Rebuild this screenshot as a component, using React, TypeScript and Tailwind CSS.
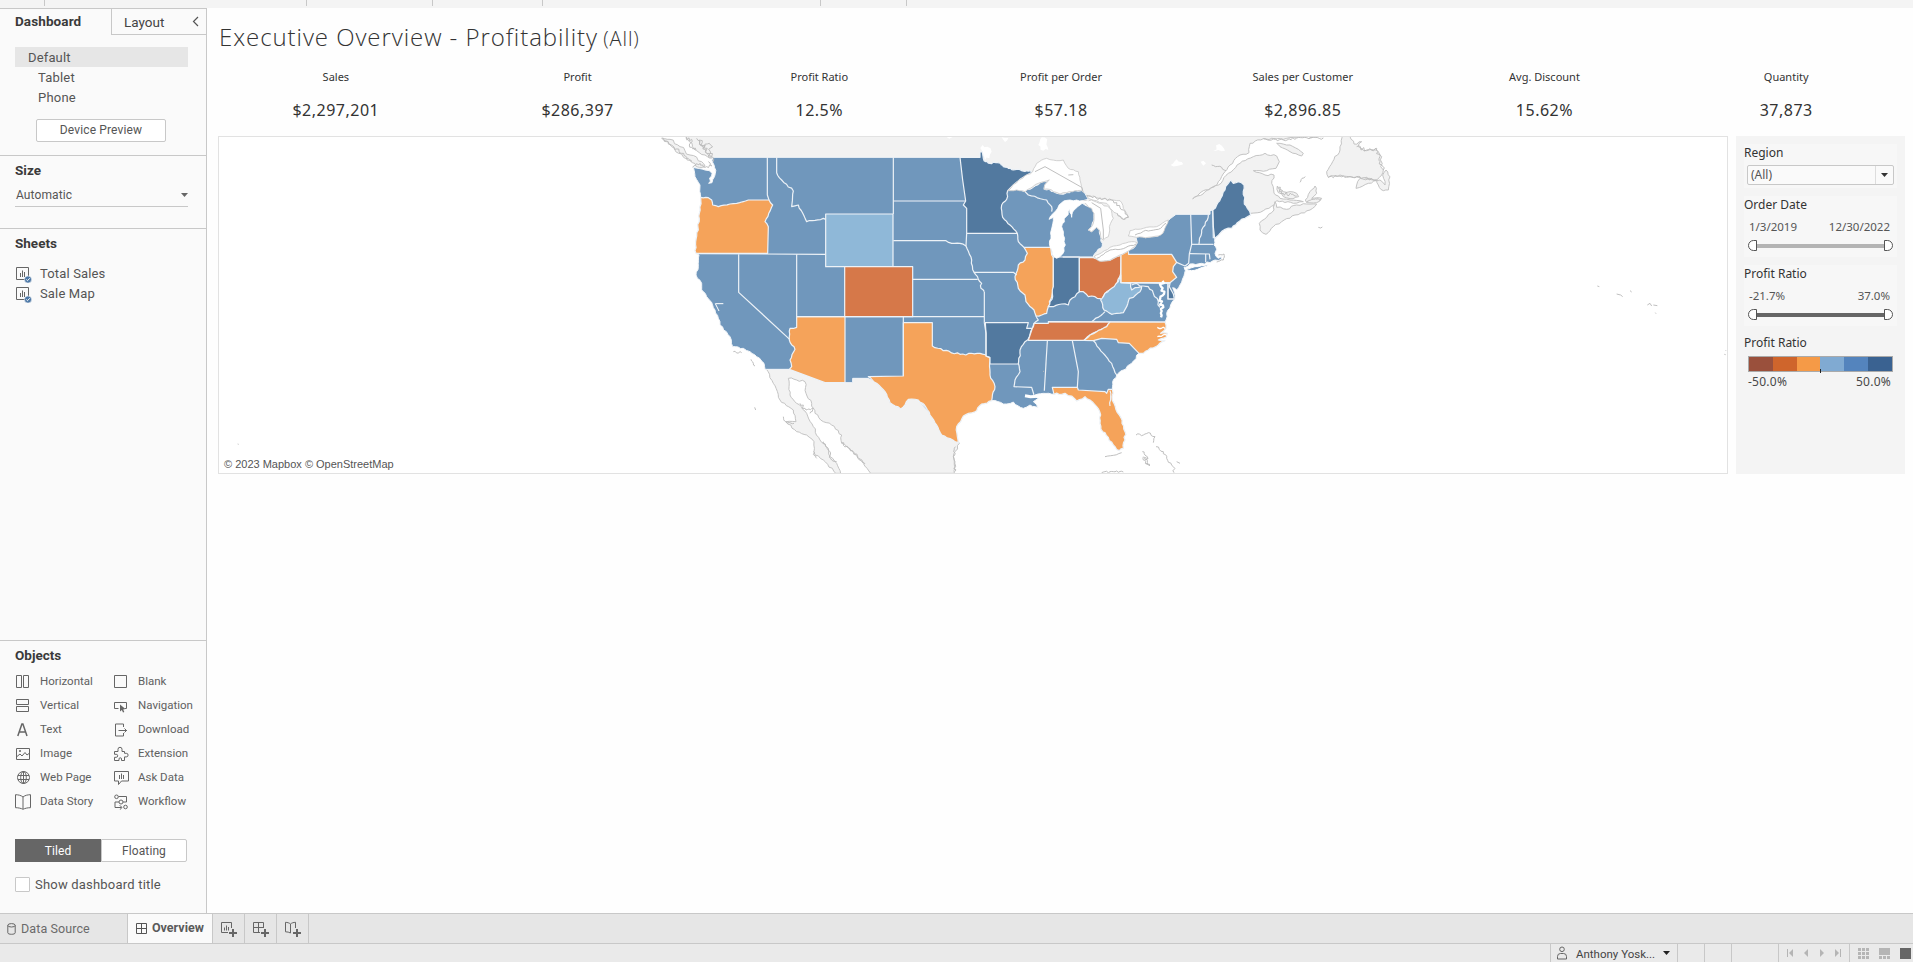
import React from "react";

type Pt = [number, number];

/* Map space is three units to a pixel; each sheet has its own origin. */
const ORIGIN = {
  nw: [0, 0],
  sw: [0, 510],
  n: [780, 0],
  s: [780, 510],
  ne: [1500, 0],
  e: [1290, 270],
} as const;

type Sheet = keyof typeof ORIGIN;

function at(sheet: Sheet, list: string): Pt[] {
  const [ox, oy] = ORIGIN[sheet];
  return list
    .trim()
    .split(/\s+/)
    .map((s) => {
      const [x, y] = s.split(",").map(Number);
      return [x + ox, y + oy] as Pt;
    });
}

/* Adds small repeatable irregularities to a coast or river line. */
function rough(pts: Pt[], amp = 3, step = 9): Pt[] {
  const out: Pt[] = [];
  for (let i = 0; i < pts.length - 1; i++) {
    const [x1, y1] = pts[i];
    const [x2, y2] = pts[i + 1];
    const len = Math.hypot(x2 - x1, y2 - y1);
    const n = Math.max(1, Math.round(len / step));
    out.push([x1, y1]);
    for (let k = 1; k < n; k++) {
      const t = k / n;
      const x = x1 + (x2 - x1) * t;
      const y = y1 + (y2 - y1) * t;
      const r = Math.sin(x * 12.9898 + y * 78.233) * 43758.5453;
      const d = (r - Math.floor(r) - 0.5) * 2 * amp;
      out.push([x - ((y2 - y1) / len) * d, y + ((x2 - x1) / len) * d]);
    }
  }
  out.push(pts[pts.length - 1]);
  return out;
}

function line(...parts: Pt[][]): string {
  return "M" + parts.flat().map(([x, y]) => `${x.toFixed(1)} ${y.toFixed(1)}`).join("L");
}
const area = (...parts: Pt[][]) => line(...parts) + "Z";
const ring = (p: Pt[], amp = 3) => area(rough([...p, p[0]], amp));

const superiorNorth = rough(at("n", "222,92 240,100 258,98 272,100 280,110 292,112 310,120 320,118 335,122 350,122 368,125"), 2, 5);
const superiorSouth = at("n", "368,125 330,148 310,165 293,182 320,178 345,185 370,172 400,155 418,150 404,165 402,178 418,178 430,185 450,192 470,188 495,182 515,182 525,190 530,200 535,208");
const michEast = at("n", "510,214 520,222 545,235 552,250 552,270 545,290 535,300 545,305 560,292 568,300 573,325 577,340 572,355 560,365 550,378 555,388");
const erieSouth = at("n", "555,388 575,393 600,391 620,380 635,375 655,363 675,350 682,338 678,322 715,322 745,318 758,310 760,290");
const maine = at("ne", "188,240 200,225 212,205 225,180 235,160 242,150 250,160 265,155 282,165 283,222 292,235 302,255 285,265 262,278 245,295 225,298 210,310 198,322");
const newEngland = at("ne", "198,322 192,345 200,358 195,370 205,385 214,380 214,388 195,390 180,398 120,402 106,412");
const atlantic = at("e", "312,142 316,152 312,168 300,195 290,210 278,203 285,235 272,255 260,280 258,300");
const ncCoast = at("s", "765,66 768,85 752,100 772,100 768,112 745,120 765,122 745,135 715,150 700,160 687,160");
const southCoast = at("s", "687,160 665,190 640,210 620,225 608,245 607,268");
const florida = at("s", "607,268 606,290 612,310 628,345 645,395 645,420 640,445 628,452 610,435 595,412 578,395 570,370 572,345 560,320 540,300 525,290 500,303 485,288 465,280 432,283");
const gulf = at("s", "432,283 400,280 375,285 385,295 370,305 384,322 360,315 340,325 325,318 310,306 290,312 245,302");
const texasCoast = at("s", "245,302 215,312 200,332 160,348 140,380 145,428");
const caCoast: Pt[] = [
  ...at("sw", "345,208 342,190 320,170 300,155 280,145 248,140 240,110 210,75 205,55 195,30 178,0"),
  ...at("nw", "170,500 155,480 155,460 138,435 145,410 147,375 138,370"),
];
const orCoast = at("nw", "138,370 137,335 145,300 148,250 152,202");
const waCoast = at("nw", "152,202 150,165 135,140 130,112 165,120 178,122 186,130 176,160 186,158 196,130 192,105 186,92 188,82");

const us = area(
  at("nw", "188,82"),
  at("n", "210,82 210,66 217,66 220,85"),
  superiorNorth,
  rough(superiorSouth),
  rough(michEast),
  rough(erieSouth),
  at("ne", "18,290 45,280 62,265 78,253 180,253 180,242"),
  rough(maine),
  rough(newEngland),
  rough(atlantic, 3),
  rough(ncCoast),
  rough(southCoast),
  rough(florida),
  rough(gulf),
  rough(texasCoast),
  at("s", "95,405 80,375 65,352 50,330 20,299"),
  at("sw", "828,322 805,300 775,298 765,315 752,327 720,308 705,275 680,250 655,235 608,235 608,248 525,248 418,208 345,208"),
  rough(caCoast),
  rough(orCoast),
  rough(waCoast),
);

const texas = area(
  at("sw", "760,68"),
  at("s", "67,68 67,138"),
  rough(at("s", "67,138 100,152 150,163 210,160 240,173")),
  rough(at("s", "240,173 240,225 255,260 245,302"), 2),
  rough(texasCoast),
  rough(at("s", "145,428 95,405 80,375 60,345"), 2),
  rough(at("sw", "840,345 828,322 805,300 775,298 765,315 752,327 720,308 705,275 680,250 655,230"), 2),
  at("sw", "760,228"),
);

const ORANGE = "#f5a35a";
const RUST = "#d67849";
const NAVY = "#52799f";
const SKY = "#8fb8d8";

const shaded: { fill: string; d: string }[] = [
  {
    fill: ORANGE,
    d: area(
      rough(at("nw", "152,202 175,203 185,210 188,225 205,230 240,222 260,220 295,210"), 1.5),
      at("nw", "295,210 357,210"),
      rough(at("nw", "357,210 368,225 345,275 355,290"), 2),
      at("nw", "353,370"),
      rough(orCoast),
    ),
  },
  { fill: SKY, d: area(at("nw", "527,252 729,252 729,410 527,410")) },
  { fill: RUST, d: area(at("nw", "584,410 788,410 788,560 584,560")) },
  { fill: ORANGE, d: area(at("sw", "440,50 585,50 585,248 525,248 418,208"), rough(at("sw", "418,208 425,200 420,180 435,148 418,120 420,85 440,82"), 2)) },
  { fill: ORANGE, d: texas },
  {
    fill: NAVY,
    d: area(
      at("n", "150,82 210,82 210,66 217,66 220,85"),
      superiorNorth,
      at("n", "330,148 310,165 293,182"),
      rough(at("n", "293,182 290,208 275,225 278,262 300,285 322,310"), 2),
      at("n", "170,310 170,235 160,225 167,213 158,150"),
    ),
  },
  {
    fill: ORANGE,
    d: area(
      at("n", "342,352 422,352 425,375 430,382 430,470"),
      rough(at("n", "430,470 425,500 415,530 410,550 395,555 378,558 372,540 348,515 345,495 325,475 315,440 325,405 345,390 352,370 342,352"), 2),
    ),
  },
  { fill: NAVY, d: area(at("n", "430,381 508,381 508,485"), rough(at("n", "508,485 495,500 480,510 475,525 455,522 430,530 415,530 428,500 430,470"))) },
  {
    fill: RUST,
    d: area(
      at("n", "508,383 550,383 575,393 600,391 620,380 633,376 632,430"),
      rough(at("n", "632,430 620,465 600,480 585,490 577,510 555,500 535,500 520,485 508,485"), 2),
    ),
  },
  { fill: ORANGE, d: area(at("e", "123,105 145,93 146,103 275,103 290,127 280,140 278,155 290,172 270,188 123,188")) },
  {
    fill: SKY,
    d: area(at("e", "122,165 122,188 152,190"), rough(at("e", "152,190 155,210 165,203 185,200 180,215 160,232 148,235 140,260 130,278 110,280 95,283 72,270 62,240 70,230 75,220 95,205 115,185"), 2)),
  },
  {
    fill: NAVY,
    d: area(at("s", "226,68 355,68 350,85 367,85"), rough(at("s", "367,85 358,110 345,125 330,150 325,192")), at("s", "240,192 240,173 228,168 228,100")),
  },
  { fill: RUST, d: area(at("s", "372,70 415,70 415,65 600,66"), rough(at("s", "600,66 590,80 560,95 540,105 522,121"), 2), at("s", "355,121 362,100")) },
  {
    fill: ORANGE,
    d: area(at("s", "600,66"), rough(ncCoast), at("s", "658,130 625,128 620,118 575,115 550,122 522,121"), rough(at("s", "522,121 540,105 560,95 590,80 600,66"), 2)),
  },
  { fill: ORANGE, d: area(at("s", "427,262 502,262 505,270 585,275 590,280 595,268"), rough(florida)) },
  { fill: NAVY, d: area(rough(maine), at("ne", "194,325 190,290")) },
  { fill: NAVY, d: area(at("e", "264,190 270,190 268,200 280,222 283,237 264,237")) },
];

const borders: string[] = [
  line(at("nw", "352,82 352,195 357,210")),
  line(at("nw", "138,371 527,373")),
  line(at("nw", "380,82 380,128"), rough(at("nw", "380,128 395,150 430,183 425,230 445,225 470,275 520,265 527,268"))),
  line(at("nw", "730,82 730,252")),
  line(at("nw", "440,373 440,560")),
  line(at("nw", "266,373 266,487 419,628")),
  line(at("nw", "440,560 1002,560")),
  line(at("sw", "760,50 760,228")),
  line(at("nw", "730,213 946,213")),
  line(at("nw", "730,332 888,332"), rough(at("n", "108,332 125,340 150,340 168,348"), 2)),
  line(at("nw", "788,448 983,448")),
  line(at("n", "170,310 168,348"), rough(at("n", "168,348 185,390 192,427 205,448 215,460 213,475 223,485"))),
  line(at("n", "223,485 223,578")),
  line(at("n", "192,427 310,427 320,435")),
  line(rough(at("n", "322,310 325,335 342,352"), 2)),
  line(at("s", "223,68 228,100 228,168 240,173")),
  line(rough(at("s", "325,190 330,215 315,240 312,260"), 2), at("s", "365,262 372,285")),
  line(rough(at("s", "378,48 385,60 372,70 367,85"), 2)),
  line(at("s", "412,122 403,272")),
  line(at("s", "487,122 505,215 502,262")),
  line(rough(at("s", "550,122 580,160 605,190 620,225"), 2)),
  line(at("s", "415,65 765,66")),
  line(rough(at("e", "35,305 75,275"), 2)),
  line(at("n", "345,185 355,195"), rough(at("n", "355,195 410,210 425,230 425,245"), 2)),
  line(at("n", "458,381 550,381")),
  line(at("e", "290,127 315,138")),
  line(at("ne", "122,253 125,343 118,372 116,400 105,408")),
  line(rough(at("ne", "175,253 172,270 155,300 147,342"), 2)),
  line(at("ne", "125,343 190,343")),
  line(at("ne", "118,371 178,372 180,388")),
  line(at("ne", "167,372 167,396")),
  line(at("ne", "188,240 190,325")),
  line(at("e", "123,188 264,190 264,237 283,237")),
  line(rough(at("e", "155,195 170,190 190,198 205,200 220,220 235,245 240,262"), 4)),
  line(rough(at("s", "600,272 602,290 600,318"), 2)),
];

const lakes = {
  superior: ring(at("n", "293,182 330,148 368,125 380,100 410,85 440,92 460,90 475,115 505,125 510,150 518,180 495,182 470,188 450,192 430,185 418,178 402,178 404,165 418,150 385,160 345,185 320,180"), 2),
  michigan: ring(at("n", "480,210 455,218 443,235 430,250 417,268 430,262 424,300 420,350 428,375 440,385 458,372 466,345 460,315 455,290 468,260 480,238 485,262 492,240 510,225 535,212 500,210")),
  huron: ring(at("n", "515,214 545,210 575,220 600,235 610,265 598,290 595,320 580,330 573,325 568,300 560,292 545,305 535,300 545,290 552,270 552,250 545,235")),
  georgian: ring(at("n", "530,195 560,203 600,210 630,212 640,235 655,262 640,268 620,250 600,235 590,220 560,212 535,205")),
  erie: ring(at("n", "552,380 575,368 600,352 630,345 665,335 682,338 675,350 655,363 620,380 600,391 570,394"), 2),
  ontario: ring(at("n", "655,318 660,302 700,295 740,290 775,270 758,310 745,318 715,322 680,322"), 2),
};

const canada = area(
  at("nw", "108,16"),
  rough(at("nw", "108,18 118,35 140,62 165,75 188,84"), 6),
  at("nw", "700,120"),
  at("n", "300,140 560,420 660,370 760,330"),
  at("ne", "120,270 190,260 240,240"),
  rough(at("ne", "302,250 340,242 372,225 380,212 430,220 460,215 420,210 390,205 372,190 365,160 372,135 345,135 310,122 350,122 378,115 388,95 380,78 345,70 310,80 270,100 235,130 205,165 165,185 128,207"), 3),
  rough(at("ne", "128,207 160,182 190,172 205,155 225,125 240,105 270,75 297,68 300,40 340,26 400,28 440,22 520,20")),
  at("ne", "520,10"),
);

const mexico = area(
  rough(at("sw", "348,206 370,250 390,300 430,330 438,365 408,365 440,395 470,405 492,425 495,465 520,480 557,520")),
  rough(at("sw", "572,520 560,490 540,470 535,445 510,420 490,380 470,340 440,310 420,285 415,235 440,240 465,245 468,280 485,310 495,340 520,365 545,375 575,405 575,430 610,455 640,490 662,520")),
  rough(at("s", "133,520 130,470 148,430")),
  at("s", "60,300 -180,180"),
  at("sw", "440,200"),
);

const islands: string[] = [
  ring(at("nw", "35,24 60,28 90,50 120,75 155,95 165,108 148,112 120,92 95,72 65,50"), 5),
  ring(at("ne", "380,40 420,45 445,58 460,70 455,78 420,65 390,50"), 1.5),
  ring(at("ne", "578,14 570,60 548,95 530,125 535,142 570,135 600,140 630,143 640,150 660,145 680,150 695,135 700,120 692,110 695,80 680,60 650,62 625,50 635,35 612,42 600,20"), 4),
  ring(at("ne", "630,145 680,150 685,165 700,182 715,180 720,140 708,120 698,135 705,165 690,150 655,160 618,175 620,165"), 3),
  ring(at("ne", "382,168 400,185 440,190 446,200 420,206 400,200 385,188"), 4),
  ring(at("ne", "495,168 500,190 485,205 515,205 500,218 470,218 466,210 480,185"), 3),
  ring(at("ne", "375,215 380,232 410,238 440,225 470,222 500,222 480,240 435,255 395,275 370,290 348,313 330,300 328,280 350,262 372,240"), 3),
];

const specks: string[] = [
  line(rough(at("nw", "140,25 160,50 185,80 178,40 160,55 148,30 170,70 190,95"), 8, 6)),
  line(rough(at("nw", "108,22 125,28 118,45 138,60"), 7, 5)),
  line(rough(at("nw", "128,112 150,100 165,112 185,108 175,95"), 5, 5)),
  line(rough(at("nw", "38,25 65,45 95,70 125,95"), 5, 5)),
  line(rough(at("sw", "250,155 275,158"), 3, 5)),
  line(rough(at("sw", "303,178 315,198"), 3, 5)),
  line(at("sw", "314,322 317,330")),
  line(rough(at("sw", "400,350 408,366 432,370"), 4, 5)),
  line(rough(at("sw", "450,310 468,330 490,325 480,340"), 5, 5)),
  line(rough(at("sw", "490,455 500,475"), 4, 4)),
  line(rough(at("sw", "520,425 535,450 545,480 560,485"), 4, 5)),
  line(rough(at("sw", "575,428 610,458 645,492"), 4, 5)),
  line(rough(at("s", "136,440 132,480 134,515"), 5, 5)),
  line(rough(at("s", "678,405 700,405 715,398 735,410 730,428"), 4, 6)),
  line(rough(at("s", "697,455 712,470 705,478 718,498 700,470"), 6, 4)),
  line(rough(at("s", "738,440 760,455 770,475 790,500 792,518"), 4, 6)),
  line(at("s", "800,485 810,490")),
  line(rough(at("s", "575,518 600,515 640,516"), 3, 5)),
  line(rough(at("s", "585,470 610,466 635,458"), 2, 8)),
  line(rough(at("ne", "185,105 215,112 228,122"), 3, 6)),
  line(rough(at("ne", "340,26 400,30 440,24 520,24"), 4, 6)),
  line(rough(at("ne", "450,157 456,145 466,140"), 2, 5)),
  line(at("ne", "505,292 512,294 517,291")),
  line(rough(at("ne", "620,50 650,60 680,55 690,95 700,120"), 7, 5)),
  line(rough(at("ne", "535,142 580,138 620,140 680,150"), 4, 5)),
  line(rough(at("ne", "385,172 400,190 440,198"), 7, 4)),
  line(rough(at("ne", "470,215 490,208 512,206"), 5, 4)),
  line(rough(at("ne", "205,375 222,372 220,390 200,396"), 3, 5)),
  line(rough(at("n", "675,315 700,304 745,298 768,280"), 2, 8)),
  line(rough(at("n", "560,385 600,360 640,356 678,342"), 2, 8)),
  line(at("n", "375,125 405,110 515,172 520,188")),
  line(rough(at("n", "530,198 575,208 610,212 640,240 655,262 640,268 622,250"), 4, 6)),
  line(at("n", "545,218 572,235 580,300 580,328")),
  line(at("n", "475,135 490,134")),
  line(at("nw", "2842,468 2848,470")),
  line(at("nw", "2900,492 2912,495 2918,500")),
  line(at("nw", "2940,482 2945,486")),
  line(at("nw", "2992,525 3000,520 3005,528")),
  line(at("nw", "3010,525 3022,527")),
  line(at("nw", "3016,548 3018,551")),
  line(at("nw", "3227,661 3229,663")),
  line(at("nw", "3223,673 3227,674")),
  line(at("nw", "1179,723 1182,725")),
  line(at("nw", "-1237,942 -1234,943")),
];

const ponds: string[] = [
  ring(at("n", "218,45 232,50 245,65 238,85 225,90 212,75"), 6),
  ring(at("n", "395,22 412,28 415,60 400,62 385,45"), 5),
  ring(at("ne", "62,105 80,88 100,103 80,108"), 4),
  ring(at("ne", "152,95 160,92 168,100 160,107"), 1),
  ring(at("ne", "190,62 208,42 225,62 205,60"), 5),
  ring(at("n", "108,20 130,20 118,26"), 2),
  ring(at("n", "275,22 295,24 285,36"), 3),
];

function UsMap() {
  return (
    <svg className="block h-full w-full" viewBox="-1293 21 4524 1008" preserveAspectRatio="none" fill="none" strokeLinejoin="round">
      <g fill="#f2f2f2" stroke="#c4c4c4" strokeWidth="3">
        <path d={canada} />
        <path d={mexico} />
        {islands.map((d, i) => (
          <path key={i} d={d} />
        ))}
      </g>
      <g fill="#fff">
        {ponds.map((d, i) => (
          <path key={i} d={d} />
        ))}
      </g>
      <path d={us} fill="#7097bc" stroke="#f3f6f9" strokeWidth="3" />
      <g stroke="#edf2f7" strokeWidth="3.6">
        {shaded.map((s, i) => (
          <path key={i} d={s.d} fill={s.fill} />
        ))}
        {borders.map((d, i) => (
          <path key={i} d={d} />
        ))}
      </g>
      <path d={line(rough(at("e", "248,182 243,200 252,222 238,242 250,262 243,292"), 7, 6))} stroke="#fff" strokeWidth="7" />
      <path d={line(rough(at("e", "255,325 232,322"), 3, 6))} stroke="#fff" strokeWidth="4" />
      <path d={line(rough(at("e", "260,345 232,350"), 3, 6))} stroke="#fff" strokeWidth="4" />
      <path d={line(at("nw", "207,543 196,521 220,521"))} stroke="#fff" strokeWidth="3" />
      <path d={line(at("s", "345,287 362,290 395,288"))} stroke="#fff" strokeWidth="9" />
      <path d={ring(at("e", "317,148 345,140 385,134 370,141 335,152"), 2)} fill="#7097bc" stroke="#fff" strokeWidth="3" />
      <g fill="#fff" stroke="#cacaca" strokeWidth="2.5">
        <path d={lakes.superior} />
        <path d={lakes.huron} />
        <path d={lakes.georgian} />
        <path d={lakes.erie} />
        <path d={lakes.ontario} />
        <path d={lakes.michigan} stroke="#fff" />
      </g>
      <g stroke="#bababa" strokeWidth="2.8">
        {specks.map((d, i) => (
          <path key={i} d={d} />
        ))}
      </g>
    </svg>
  );
}

type IconProps = { children: React.ReactNode; size?: number };
function Icon({ children, size = 16 }: IconProps) {
  return (
    <svg width={size} height={size} viewBox={`0 0 ${size} ${size}`} fill="none" stroke="#666" strokeWidth="1" className="shrink-0">
      {children}
    </svg>
  );
}

const HorizontalIcon = () => (<Icon><path d="M1.500 1.500h5v12h-5zM8.500 1.500h5v12h-5z" /></Icon>);
const VerticalIcon = () => (<Icon><path d="M1.500 1.500h12v5h-12zM1.500 8.500h12v5h-12z" /></Icon>);
const TextIcon = () => (<Icon><path d="M2.800 14L6.900 2h1L12 14M4.300 10h6.200" strokeWidth="1.500" /></Icon>);
const ImageIcon = () => (<Icon><path d="M1.500 2.500h13v11h-13zM2 10.500l3-2.500 2 2 3-3.500L12 9l2-1.500" /><circle cx="5" cy="5" r="1" fill="#666" stroke="none" /></Icon>);
const GlobeIcon = () => (<Icon><circle cx="8.500" cy="7.500" r="6" /><ellipse cx="8.500" cy="7.500" rx="2.800" ry="6" /><path d="M8.500 1.500v12M3 5.500h11M3 9.500h11" /></Icon>);
const StoryIcon = () => (<Icon><path d="M8 3C6 1.300 3.500.8.500.7v13c3 0 5.500.600 7.500 1.600 2-1 4.500-1.600 7.500-1.600V.7C12.500.8 10 1.300 8 3zv12" /></Icon>);
const BlankIcon = () => (<Icon><path d="M1.500 1.500h12v12h-12z" /></Icon>);
const NavigationIcon = () => (<Icon><path d="M5.500 10.500h-4v-6h12v6h-1.500" /><path d="M7 6.500l5.500 4.500-2.300.4 1.100 2.600-1.300.6-1.100-2.600-1.900 1.500z" fill="#666" stroke="none" /></Icon>);
const DownloadIcon = () => (<Icon><path d="M10.500 5V2H2.500v12h8v-3M5.500 8.500h8.500M11.500 6.500l2 2-2 2" /></Icon>);
const ExtensionIcon = () => (<Icon><path d="M1.500 5.500H5V3.300a2 2 0 1 1 4 0V5.500h2.500V7.300h1.800a1.800 1.800 0 1 1 0 3.600h-1.800v3.600h-3v-1.500a1.200 1.200 0 0 0-2.500 0v1.500H1.500v-3.200h1.700a1.500 1.500 0 1 0 0-3H1.500z" /></Icon>);
const AskIcon = () => (<Icon><path d="M1.500 1.500h14v9.500H8.500L5.500 14.500V11h-4zM6.500 5v4M8.500 3.500V9M10.500 5v4" /></Icon>);
const WorkflowIcon = () => (<Icon><circle cx="3.500" cy="2.800" r="1.800" /><circle cx="8" cy="8" r="2" /><circle cx="12.500" cy="13" r="1.800" /><path d="M5.500 2.500h8V8H10M6 8H2v5.500h6.500M6.800 11.300L9 13.500l-2.200 2.200" /></Icon>);

const objectRows = [
  ["Horizontal", HorizontalIcon, "Blank", BlankIcon],
  ["Vertical", VerticalIcon, "Navigation", NavigationIcon],
  ["Text", TextIcon, "Download", DownloadIcon],
  ["Image", ImageIcon, "Extension", ExtensionIcon],
  ["Web Page", GlobeIcon, "Ask Data", AskIcon],
  ["Data Story", StoryIcon, "Workflow", WorkflowIcon],
] as const;

function SheetIcon() {
  return (
    <Icon size={17}>
      <path d="M1.500 1.500h12v12h-12zM5.500 7v4M7.500 4.500V11M9.500 6v5" />
      <circle cx="13" cy="13.500" r="3.600" fill="#4e79a7" stroke="#fafafa" strokeWidth=".6" />
      <path d="M11.300 13.500l1.200 1.200 2.200-2.400" stroke="#fff" />
    </Icon>
  );
}

function Sidebar() {
  return (
    <aside className="flex w-[207px] shrink-0 flex-col border-t border-r border-[#c8c8c8] bg-[#fafafa] text-[13px] text-[#555]">
      <div className="flex h-[26px] shrink-0 leading-[24px]">
        <div className="w-[111px] pl-[15px] text-[13.5px] font-bold tracking-[0.1px] text-[#3a3a3a]">Dashboard</div>
        <div className="flex flex-1 items-center justify-between border-b border-l border-[#c8c8c8] pr-[7px] pl-3 text-[13.500px] text-[#444]">
          Layout
          <svg width="7" height="11" viewBox="0 0 7 11" fill="none" stroke="#555" strokeWidth="1.200"><path d="M6 1L1.500 5.500 6 10" /></svg>
        </div>
      </div>
      <div className="mt-3 ml-[15px] w-[173px] shrink-0 leading-[21px]">
        <div className="h-5 bg-[#e6e6e6] pl-[13px] tracking-[0.15px]">Default</div>
        <div className="h-5 pl-[23px] tracking-[0.2px]">Tablet</div>
        <div className="h-5 pl-[23px] tracking-[0.2px]">Phone</div>
      </div>
      <button className="mt-3 ml-9 h-[23px] w-[130px] shrink-0 rounded-[2px] border border-[#c8c8c8] bg-white pb-px text-xs leading-none tracking-[0.15px]">Device Preview</button>
      <div className="mt-[13px] h-[73px] shrink-0 border-t border-[#c8c8c8] px-[15px]">
        <div className="mt-1 text-[13.5px] leading-5 font-bold text-[#3a3a3a]">Size</div>
        <div className="mt-[3px] flex h-6 w-[173px] items-center justify-between border-b border-[#c8c8c8] pl-px text-[12px] tracking-[0.1px]">
          Automatic
          <svg width="7" height="4" viewBox="0 0 7 4"><path d="M0 0h7L3.500 4z" fill="#666" /></svg>
        </div>
      </div>
      <div className="flex-1 border-t border-[#c8c8c8] px-[15px]">
        <div className="mt-1 mb-[11px] text-[13.5px] leading-5 font-bold text-[#3a3a3a]">Sheets</div>
        {["Total Sales", "Sale Map"].map((name) => (
          <div key={name} className="flex h-5 items-center gap-2 tracking-[0.15px]">
            <SheetIcon />
            {name}
          </div>
        ))}
      </div>
      <div className="h-[273px] shrink-0 border-t border-[#c8c8c8] px-[15px]">
        <div className="mt-1 mb-[5px] text-[13.5px] leading-5 font-bold text-[#3a3a3a]">Objects</div>
        {objectRows.map(([a, A, b, B]) => (
          <div key={a} className="flex h-6 items-center text-[11.5px] text-[#606060]">
            <div className="flex w-[98px] shrink-0 items-center gap-[9px]"><A />{a}</div>
            <div className="flex shrink-0 items-center gap-[9px] whitespace-nowrap"><B /><span>{b}</span></div>
          </div>
        ))}
        <div className="mt-[25px] flex h-[23px] w-[172px] text-center text-xs leading-[24px] tracking-[0.1px]">
          <div className="w-[86px] bg-[#666] text-white">Tiled</div>
          <div className="flex-1 rounded-r-[2px] border border-[#c8c8c8] bg-white leading-[22px]">Floating</div>
        </div>
        <div className="mt-[15px] flex items-center gap-[5px] tracking-[0.2px]">
          <div className="size-[15px] rounded-[1px] border border-[#c8c8c8] bg-white" />
          <div className="leading-[15px]">Show dashboard title</div>
        </div>
      </div>
    </aside>
  );
}

const kpis = [
  ["Sales", "$2,297,201"],
  ["Profit", "$286,397"],
  ["Profit Ratio", "12.5%"],
  ["Profit per Order", "$57.18"],
  ["Sales per Customer", "$2,896.85"],
  ["Avg. Discount", "15.62%"],
  ["Quantity", "37,873"],
];

function RangeFilter({ title, low, high, tone }: { title: string; low: string; high: string; tone: string }) {
  return (
    <div className="mb-2 h-[61px] bg-[#f7f7f7]">
      <div className="h-[18px] text-[12px] leading-[18px]">{title}</div>
      <div className="flex h-[26px] items-center justify-between pr-[7px] pl-[5px] text-[11.5px] text-[#555]">
        <span>{low}</span>
        <span>{high}</span>
      </div>
      <div className="ml-1 flex h-[11px] w-[145px] items-center">
        <div className="h-[11px] w-[9px] rounded-l-full border border-[#555] bg-white" />
        <div className={`h-1 flex-1 ${tone}`} />
        <div className="h-[11px] w-[9px] rounded-r-full border border-[#555] bg-white" />
      </div>
    </div>
  );
}

function Filters() {
  return (
    <aside className="h-[338px] w-[169px] bg-[#f4f4f4] pt-2 pr-2 pl-2 text-[#333]">
      <div className="mb-2 h-11 bg-[#f7f7f7]">
        <div className="h-[21px] text-[12px] leading-[18px]">Region</div>
        <div className="ml-[3px] flex h-5 w-[147px] items-center rounded-[2px] border border-[#c8c8c8] bg-[#fafafa] text-[12px] text-[#555]">
          <span className="flex-1 pl-[3px]">(All)</span>
          <span className="flex h-full w-[18px] items-center justify-center border-l border-[#ddd]">
            <svg width="7" height="4" viewBox="0 0 7 4"><path d="M0 0h7L3.500 4z" fill="#333" /></svg>
          </span>
        </div>
      </div>
      <RangeFilter title="Order Date" low="1/3/2019" high="12/30/2022" tone="bg-[#b4b4b4]" />
      <RangeFilter title="Profit Ratio" low="-21.7%" high="37.0%" tone="bg-[#666]" />
      <div className="h-[22px] text-[12px] leading-[18px]">Profit Ratio</div>
      <div className="relative ml-1 flex h-4 w-[145px] border border-[#aaa]">
        <div className="flex-1 bg-[#9a503c]" />
        <div className="flex-1 bg-[#cf652c]" />
        <div className="flex-1 bg-[#f59a47]" />
        <div className="flex-1 bg-[#80aad2]" />
        <div className="flex-1 bg-[#5484bd]" />
        <div className="flex-1 bg-[#3a6291]" />
        <div className="absolute top-[12px] left-[71px] h-1 w-px bg-[#222]" />
      </div>
      <div className="ml-1 flex w-[143px] justify-between text-[12px] leading-5 tracking-[0.25px] text-[#484848]">
        <span>-50.0%</span>
        <span>50.0%</span>
      </div>
    </aside>
  );
}

function Dashboard() {
  return (
    <main className="flex-1 bg-[#fefefe] pl-2 font-['Noto_Sans','Open_Sans',sans-serif] text-[#333]">
      <h1 className="h-[54px] pl-1 font-['Open_Sans','Noto_Sans',sans-serif] text-2xl leading-[58px] font-light tracking-[0.93px] whitespace-nowrap">
        Executive Overview - Profitability <span className="-ml-0.5 text-xl">(All)</span>
      </h1>
      <div className="flex w-[1692px] text-center">
        {kpis.map(([label, value]) => (
          <div key={label} className="flex h-[74px] flex-1 flex-col">
            <div className="mt-[6px] text-[11px] leading-[18px]">{label}</div>
            <div className="mt-[12px] text-[16px] leading-6 tracking-[0.5px]">{value}</div>
          </div>
        ))}
      </div>
      <div className="flex gap-2 pl-[3px]">
        <div className="relative h-[338px] w-[1510px] border border-[#e2e2e2] bg-white">
          <UsMap />
          <div className="absolute bottom-[1px] left-[5px] font-['Liberation_Sans',sans-serif] text-[11px] leading-[15px] text-[#555]">© 2023 Mapbox © OpenStreetMap</div>
        </div>
        <Filters />
      </div>
    </main>
  );
}

function SheetTabs() {
  return (
    <div className="flex h-[31px] shrink-0 border-y border-[#c8c8c8] bg-[#e6e6e6] text-[13px] text-[#6a6a6a]">
      <div className="flex w-[127px] items-center gap-[5px] pl-[7px] text-[12.500px] tracking-[0.1px]">
        <svg width="9" height="12" viewBox="0 0 9 12" fill="none" stroke="#666"><ellipse cx="4.500" cy="2.300" rx="3.700" ry="1.700" /><path d="M.8 2.300v7.500c0 2 7.400 2 7.400 0v-7.500" /></svg>
        <span className="pt-0.5">Data Source</span>
      </div>
      <div className="flex w-[86px] items-center gap-[5px] border-x border-[#c8c8c8] bg-[#fafafa] pl-2 text-[12.500px] font-bold text-[#5a5a5a]">
        <svg width="11" height="11" viewBox="0 0 11 11" fill="none" stroke="#555" className="shrink-0"><path d="M.5.5h10v10H.5zM5.500.5v10M.5 5.500h10" /></svg>
        <span className="pb-px">Overview</span>
      </div>
      {["M.5 1.500h10v10H.5zM3.500 6.500v3M5.500 4.500v5M7.500 6v3.500", "M.5 1.500h10v10H.5zM5.500 1.500v10M.5 6.500h10", "M5.500 3C4 1.700 2.500 1.500.5 1.300v9.500c2 0 3.500.4 5 1.200V3c1.500-1.300 3-1.500 5-1.700V8"].map((d) => (
        <div key={d} className="flex w-8 items-center justify-center border-r border-[#c8c8c8]">
          <svg width="16" height="16" viewBox="0 0 16 16" fill="none" stroke="#666" className="ml-px">
            <path d={d} />
            <path d="M11 7v9M7 12h9" stroke="#e6e6e6" strokeWidth="4" />
            <path d="M12 8v8M8 12h8" strokeWidth="2" />
          </svg>
        </div>
      ))}
    </div>
  );
}

function StatusBar() {
  return (
    <div className="flex h-[18px] justify-end overflow-hidden bg-[#eaeaea] text-[11.500px] text-[#444]">
      <div className="flex w-[128px] items-center border-x border-[#c8c8c8] pl-1.5">
        <svg width="10" height="14" viewBox="0 0 10 14" fill="none" stroke="#666"><circle cx="5" cy="3.300" r="2.300" /><path d="M.5 13V10.500a3 3 0 0 1 3-3h3a3 3 0 0 1 3 3V13z" /></svg>
        <span className="ml-[9px] flex-1 pt-[3px]">Anthony Yosk...</span>
        <svg width="7" height="4" viewBox="0 0 7 4" className="mr-[7px]"><path d="M0 0h7L3.500 4z" fill="#222" /></svg>
      </div>
      <div className="w-[27px] border-r border-[#c8c8c8]" />
      <div className="w-[27px] border-r border-[#c8c8c8]" />
      <div className="w-[47px] border-r border-[#c8c8c8]" />
      <div className="flex w-[71px] items-center border-r border-[#c8c8c8] pl-2">
        <svg width="55" height="8" viewBox="0 0 55 8" fill="#b5b5b5"><path d="M0 0h1v8H0zM6 0v8L2 4zM21 0v8l-4-4zM33 0v8l4-4zM48 0v8l4-4zM53 0h1v8h-1z" /></svg>
      </div>
      <div className="flex w-[63px] items-center gap-[10px] pl-2">
        <svg width="11" height="11" viewBox="0 0 11 11" fill="#b5b5b5"><path d="M0 0h3v3H0zM4 0h3v3H4zM8 0h3v3H8zM0 4h3v3H0zM4 4h3v3H4zM8 4h3v3H8zM0 8h3v3H0zM4 8h3v3H4zM8 8h3v3H8z" /></svg>
        <svg width="11" height="11" viewBox="0 0 11 11" fill="#b5b5b5"><path d="M0 0h11v7H0zM0 8h3v3H0zM4 8h3v3H4zM8 8h3v3H8z" /></svg>
        <div className="size-[11px] bg-[#666]" />
      </div>
    </div>
  );
}

export default function App() {
  return (
    <div className="flex h-[962px] w-[1913px] flex-col overflow-hidden bg-white font-['Roboto','Liberation_Sans',sans-serif]">
      <div className="flex h-2 shrink-0 bg-[#f4f4f4]">
        <div className="h-1.5 w-[45px] border-r border-[#c8c8c8]" />
        <div className="h-1.5 w-[262px] border-r border-[#c8c8c8]" />
        <div className="h-1.5 w-[126px] border-r border-[#c8c8c8]" />
        <div className="h-1.5 w-[110px] border-r border-[#c8c8c8]" />
        <div className="h-1.5 w-[278px] border-r border-[#c8c8c8]" />
        <div className="h-1.5 w-[86px] border-r border-[#c8c8c8]" />
      </div>
      <div className="flex h-[905px] shrink-0">
        <Sidebar />
        <Dashboard />
      </div>
      <SheetTabs />
      <StatusBar />
    </div>
  );
}
